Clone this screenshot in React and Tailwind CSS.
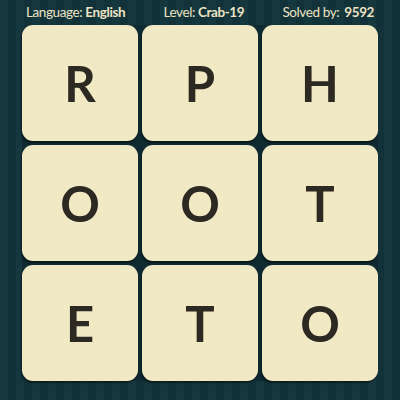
const letters = ["R", "P", "H", "O", "O", "T", "E", "T", "O"];

function Tile({ letter }) {
  return (
    <div className="flex h-[116px] w-[116px] items-center justify-center rounded-[11px] bg-[#f1e9c3] shadow-[-1px_2px_2px_rgba(0,0,0,0.45)]">
      <span className="text-[49px] font-bold leading-none text-[#2c2822]">
        {letter}
      </span>
    </div>
  );
}

export default function App() {
  return (
    <div
      className="flex h-[400px] w-[400px] flex-col bg-[repeating-linear-gradient(90deg,#15373e_0px,#15373e_8px,#12323a_8px,#12323a_16px)]"
      style={{ fontFamily: "Lato, 'Open Sans', sans-serif" }}
    >
      <div className="flex h-[25px] items-center justify-between px-[26px] pb-[1px] text-[13.5px] tracking-[-0.4px] text-[#ebe3c3]">
        <span>
          Language: <b className="font-bold">English</b>
        </span>
        <span>
          Level: <b className="font-bold">Crab-19</b>
        </span>
        <span>
          Solved by: <b className="ml-[2px] font-bold">9592</b>
        </span>
      </div>
      <div className="ml-[22px] grid w-[356px] grid-cols-3 gap-[4px] rounded-[12px] bg-[#0f2a31]">
        {letters.map((l, i) => (
          <Tile key={i} letter={l} />
        ))}
      </div>
    </div>
  );
}
